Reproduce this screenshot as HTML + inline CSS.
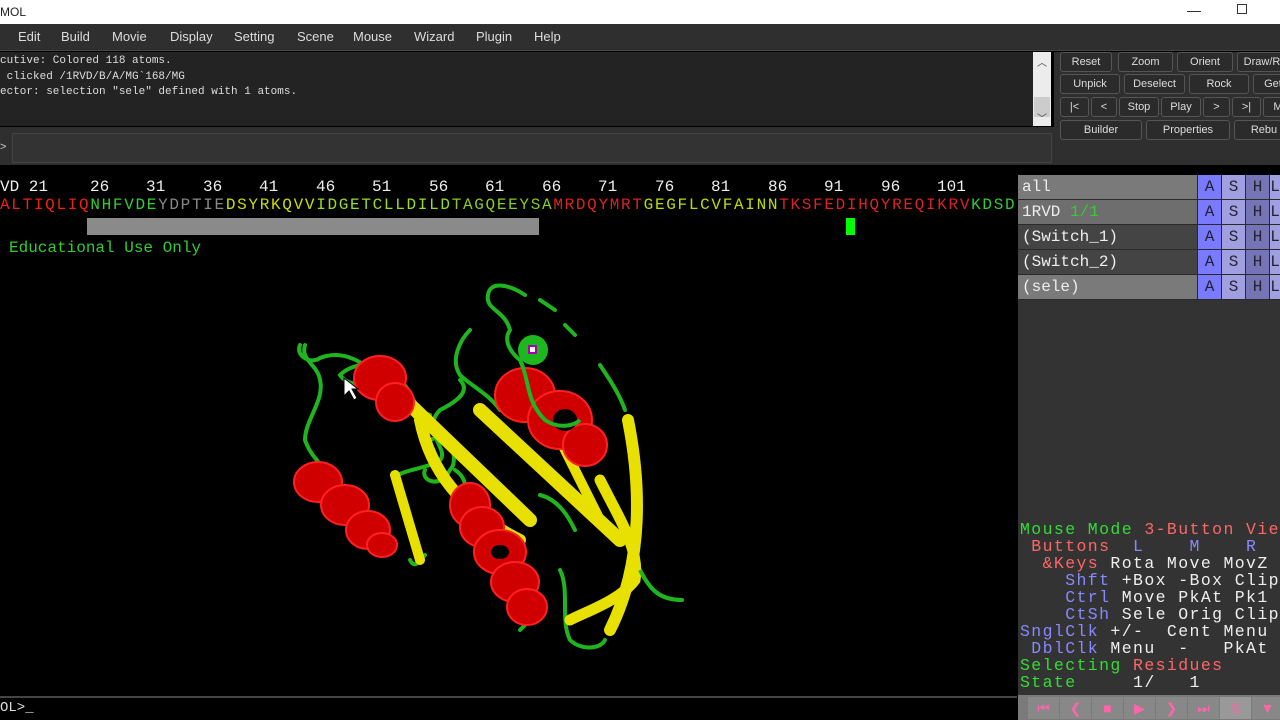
<!DOCTYPE html>
<html><head><meta charset="utf-8"><style>
*{margin:0;padding:0;box-sizing:border-box}
body{width:1280px;height:720px;overflow:hidden;background:#000;font-family:"Liberation Sans",sans-serif;position:relative}
.abs{position:absolute}
.mono{font-family:"Liberation Mono",monospace}
#title{left:0;top:0;width:1280px;height:24px;background:#fff;font-size:12px;color:#222}
#menu{left:0;top:24px;width:1280px;height:27px;background:#2f2f2f;border-bottom:1px solid #444}
#menu span{position:absolute;top:5px;font-size:13px;color:#ddd}
#out{left:0;top:52px;width:1033px;height:74px;background:#232323;color:#ddd;font-size:11px;line-height:15.5px;padding-top:2px;white-space:pre}
#sb{left:1033px;top:52px;width:18px;height:74px;background:#ececec}
#cmd{left:0;top:127px;width:1054px;height:38px;background:#2f2f2f}
#inp{left:12px;top:133px;width:1040px;height:30px;background:#333;border:1px solid #444}
#rp{left:1054px;top:52px;width:226px;height:113px;background:#2f2f2f}
.btn{position:absolute;height:20px;border:1px solid #555;border-radius:3px;background:#2b2b2b;color:#ddd;font-size:11px;text-align:center;line-height:18px;overflow:hidden;white-space:nowrap}
#viewer{left:0;top:175px;width:1017px;height:520px;background:#000}
.num{position:absolute;top:3px;color:#eee;font-size:16px}
#seq{left:0;top:21px;font-size:16px;letter-spacing:1.69px;white-space:pre}
#obj{left:1018px;top:175px;width:262px;height:520px;background:#333}
.row{position:absolute;left:0;width:262px;height:25px;font-size:16px;color:#eee;font-family:"Liberation Mono",monospace}
.row .n{position:absolute;left:0;top:0;width:179px;height:24px;padding:3px 0 0 4px}
.c{position:absolute;top:0;width:23px;height:24px;text-align:center;padding-top:3px;color:#223}
#mm{left:1020px;top:521px;font-size:16.5px;line-height:17px;white-space:pre;letter-spacing:1.4px}
#bot{left:0;top:696px;width:1017px;height:24px;background:#000;border-top:2px solid #444;color:#ddd;font-size:14px}
#ctl{left:1018px;top:695px;width:262px;height:25px;background:#7a7a7a}
.cb{position:absolute;top:2px;width:31px;height:22px;background:#888;color:#f6a;font-size:14px;text-align:center;line-height:22px}
</style></head><body>
<div id="title" class="abs"><span style="position:absolute;left:0;top:5px">MOL</span>
<span style="position:absolute;left:1187px;top:2px;font-size:14px">—</span>
<span style="position:absolute;left:1237px;top:4px;width:10px;height:10px;border:1px solid #333"></span></div>
<div id="menu" class="abs">
<span style="left:18px">Edit</span><span style="left:61px">Build</span><span style="left:112px">Movie</span><span style="left:170px">Display</span><span style="left:234px">Setting</span><span style="left:297px">Scene</span><span style="left:353px">Mouse</span><span style="left:414px">Wizard</span><span style="left:476px">Plugin</span><span style="left:534px">Help</span></div>
<div id="out" class="abs mono">cutive: Colored 118 atoms.
 clicked /1RVD/B/A/MG`168/MG
ector: selection "sele" defined with 1 atoms.</div>
<div id="sb" class="abs"><div style="position:absolute;left:1px;top:45px;width:16px;height:20px;background:#ccc"></div><div style="position:absolute;left:4px;top:2px;font-size:10px;color:#444">︿</div><div style="position:absolute;left:4px;top:58px;font-size:10px;color:#444">﹀</div></div>
<div id="cmd" class="abs"><span style="position:absolute;left:0;top:14px;color:#ccc;font-size:11px">&gt;</span></div>
<div id="inp" class="abs"></div>
<div id="rp" class="abs">
<div class="btn" style="left:6px;top:0;width:52px">Reset</div><div class="btn" style="left:64px;top:0;width:55px">Zoom</div><div class="btn" style="left:123px;top:0;width:56px">Orient</div><div class="btn" style="left:183px;top:0;width:50px">Draw/R</div>
<div class="btn" style="left:6px;top:22px;width:60px">Unpick</div><div class="btn" style="left:70px;top:22px;width:61px">Deselect</div><div class="btn" style="left:135px;top:22px;width:60px">Rock</div><div class="btn" style="left:199px;top:22px;width:40px">Get</div>
<div class="btn" style="left:6px;top:45px;width:29px">|&lt;</div><div class="btn" style="left:37px;top:45px;width:26px">&lt;</div><div class="btn" style="left:65px;top:45px;width:40px">Stop</div><div class="btn" style="left:107px;top:45px;width:40px">Play</div><div class="btn" style="left:149px;top:45px;width:27px">&gt;</div><div class="btn" style="left:178px;top:45px;width:29px">&gt;|</div><div class="btn" style="left:209px;top:45px;width:30px">M</div>
<div class="btn" style="left:6px;top:68px;width:82px">Builder</div><div class="btn" style="left:92px;top:68px;width:84px">Properties</div><div class="btn" style="left:180px;top:68px;width:60px">Rebu</div>
</div>
<div id="viewer" class="abs mono">
<span class="num" style="left:0">VD 21</span>
<span class="num" style="left:90px">26</span><span class="num" style="left:146px">31</span><span class="num" style="left:203px">36</span><span class="num" style="left:259px">41</span><span class="num" style="left:316px">46</span><span class="num" style="left:372px">51</span><span class="num" style="left:429px">56</span><span class="num" style="left:485px">61</span><span class="num" style="left:542px">66</span><span class="num" style="left:598px">71</span><span class="num" style="left:655px">76</span><span class="num" style="left:711px">81</span><span class="num" style="left:768px">86</span><span class="num" style="left:824px">91</span><span class="num" style="left:881px">96</span><span class="num" style="left:937px">101</span>
<div style="position:absolute;left:87px;top:43px;width:452px;height:17px;background:#8a8a8a"></div>
<div style="position:absolute;left:846px;top:43px;width:9px;height:17px;background:#0f0"></div>
<div style="position:absolute;left:9px;top:64px;color:#3c3;font-size:16px">Educational Use Only</div>
<svg width="1017" height="520" style="position:absolute;left:0;top:0" viewBox="0 175 1017 520">
<g fill="none" stroke-linecap="round">
<path d="M300,345 C295,355 310,365 320,358 C340,350 360,360 370,370 C380,385 350,390 340,375 C355,360 390,360 400,380 C420,400 410,410 430,415" stroke="#1fb51f" stroke-width="4"/>
<path d="M305,345 C300,360 318,365 320,380 C325,400 305,420 305,440 C310,455 318,460 318,462" stroke="#1fb51f" stroke-width="4"/>
<path d="M488,295 C490,280 510,285 525,295 M540,300 L555,310 M565,325 L575,335 M600,365 C610,380 620,395 625,410" stroke="#1fb51f" stroke-width="4"/>
<path d="M488,295 C485,310 505,310 510,330 C500,345 520,360 520,360 C530,380 520,400 545,420 C560,430 575,425 580,420" stroke="#1fb51f" stroke-width="4"/>
<path d="M470,330 C460,340 450,360 460,375 C470,385 490,395 500,410 M460,380 C470,390 460,400 440,410 C420,430 450,450 440,460 C425,470 395,470 395,480" stroke="#1fb51f" stroke-width="4"/>
<path d="M430,440 C450,430 460,460 450,470 C440,490 420,480 425,470 M455,470 C470,480 465,495 460,500" stroke="#1fb51f" stroke-width="4"/>
<path d="M640,570 C650,590 660,600 682,600 M560,570 C570,590 560,620 570,640 C580,650 600,650 605,640 M520,630 L530,620 M410,560 C415,570 420,560 425,555 M540,495 C560,500 570,520 575,530" stroke="#1fb51f" stroke-width="4"/>
<path d="M405,400 L530,520" stroke="#e8e000" stroke-width="14"/>
<path d="M480,410 L620,540" stroke="#e8e000" stroke-width="14"/>
<path d="M420,420 C430,470 460,510 520,540" stroke="#e8e000" stroke-width="12"/>
<path d="M395,475 L420,560" stroke="#e8e000" stroke-width="10"/>
<path d="M628,420 C640,480 645,560 610,630" stroke="#e8e000" stroke-width="12"/>
<path d="M600,480 C620,520 640,550 635,580 C620,600 590,610 570,620" stroke="#e8e000" stroke-width="11"/>
<path d="M560,440 L600,520" stroke="#e8e000" stroke-width="10"/>
</g>
<g fill="#d00000" stroke="#ff2020" stroke-width="2">
<ellipse cx="318" cy="482" rx="24" ry="20"/><ellipse cx="345" cy="505" rx="24" ry="20"/><ellipse cx="368" cy="530" rx="22" ry="19"/><ellipse cx="382" cy="545" rx="15" ry="12"/>
<ellipse cx="380" cy="378" rx="26" ry="22"/><ellipse cx="395" cy="402" rx="19" ry="19"/>
<ellipse cx="470" cy="505" rx="20" ry="22"/><ellipse cx="482" cy="527" rx="22" ry="20"/><ellipse cx="500" cy="552" rx="26" ry="22"/><ellipse cx="515" cy="582" rx="24" ry="20"/><ellipse cx="527" cy="607" rx="20" ry="18"/>
<ellipse cx="525" cy="395" rx="30" ry="27"/><ellipse cx="560" cy="420" rx="32" ry="29"/><ellipse cx="585" cy="445" rx="22" ry="21"/>
</g>
<g fill="#000"><ellipse cx="565" cy="420" rx="12" ry="11"/><ellipse cx="500" cy="552" rx="9" ry="7"/></g>
<path d="M640,570 C650,590 660,600 682,600 M520,360 C530,380 525,400 545,420 C560,430 575,425 580,420" fill="none" stroke="#1fb51f" stroke-width="4"/>
<circle cx="533" cy="350" r="15" fill="#1db81d"/>
<rect x="529" y="346" width="7" height="7" fill="#fff" stroke="#a0a" stroke-width="2"/>
<path d="M344,378 L344,396 L349,391 L354,400 L357,398 L352,389 L358,389 Z" fill="#fff" stroke="#000" stroke-width="1"/>
</svg>
<div id="seq" class="abs mono"><span style="color:#e21">ALTIQLIQ</span><span style="color:#3c3">NHFVDE</span><span style="color:#888">YDPTIE</span><span style="color:#cd0">DSYRKQVV</span><span style="color:#9d2">IDGETCLLDILD</span><span style="color:#8c2">TAGQEEYSA</span><span style="color:#d22">MRDQYMRT</span><span style="color:#bd0">GEGFLCVFAINN</span><span style="color:#d22">TKSFEDIHQYREQIKRV</span><span style="color:#3c3">KDSD</span></div>
</div>
<div id="obj" class="abs">
<div class="row" style="top:0;background:#2a2a2a"><div class="n" style="background:#7a7a7a">all</div><div class="c" style="left:180px;background:#7a7aff">A</div><div class="c" style="left:204px;background:#a0a0e0">S</div><div class="c" style="left:228px;background:#7575b5">H</div><div class="c" style="left:252px;background:#a0a0e0;width:10px">L</div></div>
<div class="row" style="top:25px;background:#2a2a2a"><div class="n" style="background:#6e6e6e">1RVD <span style="color:#3c3">1/1</span></div><div class="c" style="left:180px;background:#7a7aff">A</div><div class="c" style="left:204px;background:#a0a0e0">S</div><div class="c" style="left:228px;background:#7575b5">H</div><div class="c" style="left:252px;background:#a0a0e0;width:10px">L</div></div>
<div class="row" style="top:50px;background:#2a2a2a"><div class="n" style="background:#444">(Switch_1)</div><div class="c" style="left:180px;background:#7a7aff">A</div><div class="c" style="left:204px;background:#a0a0e0">S</div><div class="c" style="left:228px;background:#7575b5">H</div><div class="c" style="left:252px;background:#a0a0e0;width:10px">L</div></div>
<div class="row" style="top:75px;background:#2a2a2a"><div class="n" style="background:#444">(Switch_2)</div><div class="c" style="left:180px;background:#7a7aff">A</div><div class="c" style="left:204px;background:#a0a0e0">S</div><div class="c" style="left:228px;background:#7575b5">H</div><div class="c" style="left:252px;background:#a0a0e0;width:10px">L</div></div>
<div class="row" style="top:100px;background:#2a2a2a"><div class="n" style="background:#7a7a7a">(sele)</div><div class="c" style="left:180px;background:#7a7aff">A</div><div class="c" style="left:204px;background:#a0a0e0">S</div><div class="c" style="left:228px;background:#7575b5">H</div><div class="c" style="left:252px;background:#a0a0e0;width:10px">L</div></div>
</div>
<div id="mm" class="abs mono"><span style="color:#3d3">Mouse Mode </span><span style="color:#f66">3-Button Vie</span>
<span style="color:#f66"> Buttons  </span><span style="color:#88f">L    M    R  W</span>
<span style="color:#f66">  &amp;Keys </span><span style="color:#eee">Rota Move MovZ</span>
<span style="color:#88f">    Shft </span><span style="color:#eee">+Box -Box Clip</span>
<span style="color:#88f">    Ctrl </span><span style="color:#eee">Move PkAt Pk1</span>
<span style="color:#88f">    CtSh </span><span style="color:#eee">Sele Orig Clip</span>
<span style="color:#88f">SnglClk </span><span style="color:#eee">+/-  Cent Menu</span>
<span style="color:#88f"> DblClk </span><span style="color:#eee">Menu  -   PkAt</span>
<span style="color:#3d3">Selecting </span><span style="color:#f66">Residues</span>
<span style="color:#3d3">State</span><span style="color:#eee">     1/   1</span></div>
<div id="bot" class="abs mono"><span style="position:absolute;left:0;top:2px">OL&gt;_</span></div>
<div id="ctl" class="abs">
<div class="cb" style="left:10px">⏮</div><div class="cb" style="left:42px">❮</div><div class="cb" style="left:74px">■</div><div class="cb" style="left:106px">▶</div><div class="cb" style="left:138px">❯</div><div class="cb" style="left:170px">⏭</div><div class="cb" style="left:202px;background:#999">S</div><div class="cb" style="left:234px">▼</div>
</div>
</body></html>
